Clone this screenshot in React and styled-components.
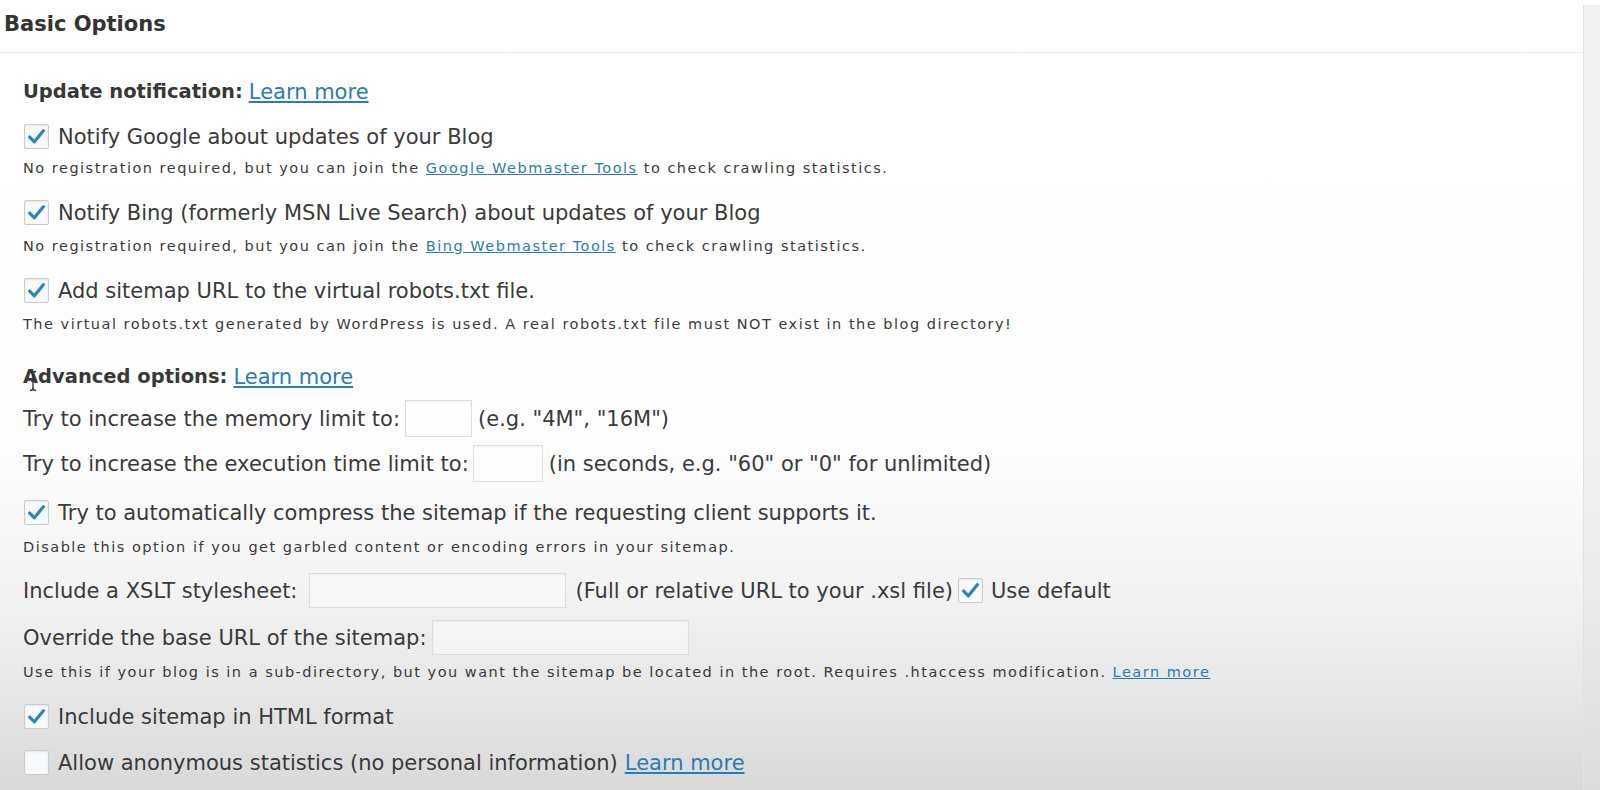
import React from "react";
import styled, { createGlobalStyle } from "styled-components";

const Global = createGlobalStyle`
  html, body { margin: 0; padding: 0; }
  body {
    font-family: "DejaVu Sans", "Liberation Sans", sans-serif;
    color: #3c3c3c;
  }
`;

const Page = styled.div`
  width: 1600px;
  height: 790px;
  overflow: hidden;
  display: flex;
  position: relative;
  background: linear-gradient(to bottom, #ffffff 0%, #fefefe 55%, #f3f3f3 75%, #e4e4e4 90%, #d9d9d9 100%);
`;

const Panel = styled.div`
  flex: 1;
  display: flex;
  flex-direction: column;
  min-width: 0;
`;

const Gutter = styled.div`
  width: 16px;
  margin-top: 5px;
  border-left: 1px solid #e2e2e2;
  background: rgba(225, 225, 225, 0.45);
`;

const Header = styled.div`
  height: 53px;
  display: flex;
  align-items: center;
  padding: 0 0 4px 4px;
  box-sizing: border-box;
  border-bottom: 1px solid #ebebeb;
  font-weight: bold;
  font-size: 21px;
  color: #333;
`;

const Content = styled.div`
  display: flex;
  flex-direction: column;
  padding: 20px 0 0 23px;
  position: relative;
`;

const Title = styled.div`
  height: 37px;
  display: flex;
  align-items: center;
  gap: 6px;
  margin-top: ${(p) => p.$mt || 0}px;
  font-weight: bold;
  font-size: 19.5px;
  color: #383838;
  white-space: nowrap;
`;

const Row = styled.div`
  height: 37px;
  display: flex;
  align-items: center;
  margin-top: ${(p) => p.$mt || 0}px;
  font-size: 21px;
  color: #3a3a3a;
  white-space: nowrap;
`;

const Desc = styled.div`
  height: 22px;
  display: flex;
  align-items: center;
  margin-top: ${(p) => p.$mt || 0}px;
  font-size: 14.5px;
  letter-spacing: 1.5px;
  color: #3a3a3a;
  white-space: pre;
`;

const Link = styled.a`
  color: #2a7cb3;
  text-decoration: underline;
  font-weight: normal;
  font-size: ${(p) => (p.$size ? `${p.$size}px` : "inherit")};
  margin-left: ${(p) => p.$ml || 0}px;
  cursor: pointer;
`;

const Box = styled.span`
  width: 25px;
  height: 25px;
  flex: none;
  box-sizing: border-box;
  border: 1px solid #c9cdd0;
  border-radius: 2px;
  background: #f7f9fa;
  box-shadow: inset 0 1px 2px rgba(0, 0, 0, 0.08);
  display: inline-flex;
  align-items: center;
  justify-content: center;
  margin: 0 ${(p) => p.$gap ?? 9}px 0 ${(p) => p.$lead ?? 1}px;
`;

const TextInput = styled.span`
  display: inline-block;
  flex: none;
  width: ${(p) => p.$w}px;
  height: ${(p) => p.$h || 35}px;
  box-sizing: border-box;
  border: 1px solid #dedede;
  background: rgba(255, 255, 255, 0.45);
  box-shadow: inset 0 1px 2px rgba(0, 0, 0, 0.05);
  margin: 0 ${(p) => p.$mr ?? 7}px 0 ${(p) => p.$ml ?? 8}px;
`;

const Cursor = styled.svg`
  position: absolute;
  left: 28px;
  top: 317px;
`;

function Check({ on = true, gap, lead }) {
  return (
    <Box $gap={gap} $lead={lead}>
      {on && (
        <svg width="19" height="17" viewBox="0 0 18 16">
          <path d="M2.5 8.5 L7 13 L15.5 2.5" fill="none" stroke="#2a86b8" strokeWidth="3" strokeLinecap="round" strokeLinejoin="round" />
        </svg>
      )}
    </Box>
  );
}

export default function App() {
  return (
    <>
      <Global />
      <Page>
        <Panel>
          <Header>Basic Options</Header>
          <Content>
            <Title>
              Update notification:<Link $size={21}>Learn more</Link>
            </Title>
            <Row $mt={8}>
              <Check />
              Notify Google about updates of your Blog
            </Row>
            <Desc $mt={1.5}>
              No registration required, but you can join the <Link>Google Webmaster Tools</Link> to check crawling statistics.
            </Desc>
            <Row $mt={15.5}>
              <Check />
              Notify Bing (formerly MSN Live Search) about updates of your Blog
            </Row>
            <Desc $mt={3.5}>
              No registration required, but you can join the <Link>Bing Webmaster Tools</Link> to check crawling statistics.
            </Desc>
            <Row $mt={15.5}>
              <Check />
              Add sitemap URL to the virtual robots.txt file.
            </Row>
            <Desc $mt={3.5}>
              The virtual robots.txt generated by WordPress is used. A real robots.txt file must NOT exist in the blog directory!
            </Desc>
            <Title $mt={23.5}>
              Advanced options:<Link $size={21}>Learn more</Link>
            </Title>
            <Row $mt={5}>
              Try to increase the memory limit to:
              <TextInput $w={67} $h={37} $ml={5} $mr={6} />
              (e.g. "4M", "16M")
            </Row>
            <Row $mt={8}>
              Try to increase the execution time limit to:
              <TextInput $w={70} $h={37} $ml={4} $mr={6} />
              (in seconds, e.g. "60" or "0" for unlimited)
            </Row>
            <Row $mt={12}>
              <Check />
              Try to automatically compress the sitemap if the requesting client supports it.
            </Row>
            <Desc $mt={4.5}>
              Disable this option if you get garbled content or encoding errors in your sitemap.
            </Desc>
            <Row $mt={14.5}>
              Include a XSLT stylesheet:
              <TextInput $w={257} $ml={12} $mr={9} />
              (Full or relative URL to your .xsl file)
              <Check lead={5} gap={8} />
              Use default
            </Row>
            <Row $mt={10}>
              Override the base URL of the sitemap:
              <TextInput $w={257} $ml={6} />
            </Row>
            <Desc $mt={4.5}>
              Use this if your blog is in a sub-directory, but you want the sitemap be located in the root. Requires .htaccess modification. <Link>Learn more</Link>
            </Desc>
            <Row $mt={15.5}>
              <Check />
              Include sitemap in HTML format
            </Row>
            <Row $mt={9}>
              <Check on={false} />
              Allow anonymous statistics (no personal information)
              <Link $ml={7}>Learn more</Link>
            </Row>
            <Cursor width="10" height="22" viewBox="0 0 10 22">
              <path d="M2 1.5 Q5 1.5 5 4 L5 18 Q5 20.5 2 20.5 M8 1.5 Q5 1.5 5 4 M5 18 Q5 20.5 8 20.5 M3 11 L7 11" fill="none" stroke="#333" strokeWidth="1.4" />
            </Cursor>
          </Content>
        </Panel>
        <Gutter />
      </Page>
    </>
  );
}
